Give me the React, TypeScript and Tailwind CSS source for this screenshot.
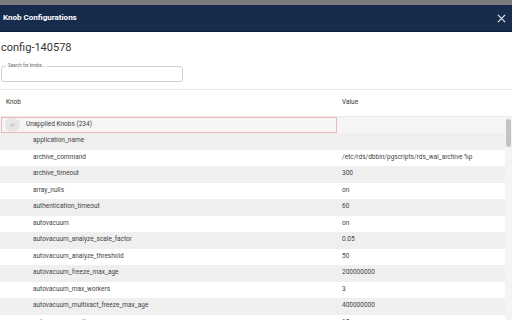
import React from "react";

interface Knob {
  name: string;
  value: string;
}

const knobs: Knob[] = [
  { name: "application_name", value: "" },
  { name: "archive_command", value: "/etc/rds/dbbin/pgscripts/rds_wal_archive %p" },
  { name: "archive_timeout", value: "300" },
  { name: "array_nulls", value: "on" },
  { name: "authentication_timeout", value: "60" },
  { name: "autovacuum", value: "on" },
  { name: "autovacuum_analyze_scale_factor", value: "0.05" },
  { name: "autovacuum_analyze_threshold", value: "50" },
  { name: "autovacuum_freeze_max_age", value: "200000000" },
  { name: "autovacuum_max_workers", value: "3" },
  { name: "autovacuum_multixact_freeze_max_age", value: "400000000" },
  { name: "autovacuum_naptime", value: "15" },
];

const App: React.FC = () => {
  return (
    <div
      className="w-[512px] h-[320px] overflow-hidden bg-white flex flex-col"
      style={{ fontFamily: "Roboto, 'Liberation Sans', sans-serif" }}
    >
      {/* Backdrop strip */}
      <div className="h-[5px] bg-[#7b7b7b] shrink-0" />

      {/* Header */}
      <div className="h-[27px] shrink-0 bg-[#172b4d] border-b border-[#0e1d36] flex items-center justify-between pl-[3px] pr-[6px]">
        <span className="text-[8px] font-bold text-white">Knob Configurations</span>
        <svg width="9" height="9" viewBox="0 0 10 10" className="text-[#dfe3ea]">
          <path d="M1 1L9 9M9 1L1 9" stroke="currentColor" strokeWidth="1.4" />
        </svg>
      </div>

      {/* Title */}
      <div className="pl-[1px] pt-[9px] text-[11px] text-[#333] leading-[14px]">config-140578</div>

      {/* Search */}
      <div className="pl-[1px] pt-[11px] shrink-0">
        <div className="relative w-[182px] h-[16px] rounded-[3px] border border-[#d0d0d0]">
          <span className="absolute left-[4px] top-[-4px] bg-white px-[2px] text-[4.5px] leading-[6px] text-[#666]">
            Search for knobs...
          </span>
        </div>
      </div>

      {/* Table */}
      <div className="mt-[7px] border-t border-[#ececec] flex-1 flex flex-col min-h-0">
        <div className="h-[27px] shrink-0 flex items-center text-[6.5px] text-[#333] border-b border-[#ececec]">
          <div className="w-[342px] pl-[6px]">Knob</div>
          <div>Value</div>
        </div>

        <div className="flex-1 flex min-h-0">
          <div className="flex-1 flex flex-col min-w-0">
            {/* Group row */}
            <div className="h-[16px] shrink-0 flex bg-[#f5f5f5]">
              <div className="w-[336px] ml-[1px] flex items-center border border-[#f0b8b8] gap-[6px] pl-[3px]">
                <div className="w-[15px] h-[14px] rounded-full bg-[#e6e6e6] flex items-center justify-center">
                  <svg width="5" height="4" viewBox="0 0 6 4">
                    <path d="M0.5 0.8L3 3.2L5.5 0.8" fill="none" stroke="#777" strokeWidth="0.8" />
                  </svg>
                </div>
                <span className="text-[6.5px] text-[#444]">Unapplied Knobs (234)</span>
              </div>
            </div>

            {knobs.map((k, i) => (
              <div
                key={k.name}
                className={`h-[16.5px] shrink-0 flex items-center text-[6.5px] text-[#444] ${
                  i % 2 === 0 ? "bg-[#efefef]" : "bg-white"
                }`}
              >
                <div className="w-[342px] pl-[33px]">{k.name}</div>
                <div>{k.value}</div>
              </div>
            ))}
          </div>

          {/* Scrollbar */}
          <div className="w-[7px] shrink-0 bg-[#f4f4f4] pt-[2px] flex justify-center">
            <div className="w-[5px] h-[28px] rounded-full bg-[#c3c3c3]" />
          </div>
        </div>
      </div>
    </div>
  );
};

export default App;
